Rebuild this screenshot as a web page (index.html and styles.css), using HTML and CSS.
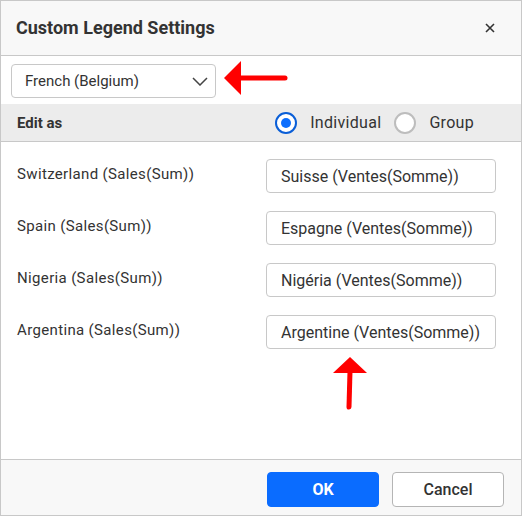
FILE: index.html
```html
<!DOCTYPE html>
<html lang="en">
	<head>
		<meta charset="UTF-8" />
		<title>Custom Legend Settings</title>
		<link rel="stylesheet" href="styles.css">
	</head>
	<body>
		<div class="dialog">
			<div class="dialog-header">
				<h1>Custom Legend Settings</h1>
				<button class="close-btn" aria-label="Close">
					<svg width="10" height="10" viewBox="0 0 10 10">
						<path d="M1 1 L9 9 M9 1 L1 9" stroke="#333" stroke-width="1.6" fill="none" />
					</svg>
				</button>
			</div>

			<div class="lang-row">
				<div class="dropdown">
					<span>French (Belgium)</span>
					<svg width="16" height="9" viewBox="0 0 16 9">
						<path d="M1 1 L8 8 L15 1" stroke="#444" stroke-width="1.5" fill="none" />
					</svg>
				</div>
				<!-- pointer to the language picker -->
				<svg class="arrow arrow-left" width="64" height="36" viewBox="0 0 64 36">
					<polygon points="0,18 17,1 17,35" fill="#f00" />
					<line x1="15" y1="18" x2="61" y2="18" stroke="#f00" stroke-width="5" stroke-linecap="round" />
				</svg>
			</div>

			<div class="edit-bar">
				<span class="edit-label">Edit as</span>
				<div class="radios">
					<label class="radio checked"><span class="dot"></span>Individual</label>
					<label class="radio"><span class="dot"></span>Group</label>
				</div>
			</div>

			<div class="legend-list">
				<div class="legend-row">
					<span class="legend-name">Switzerland (Sales(Sum))</span>
					<div class="legend-input">Suisse (Ventes(Somme))</div>
				</div>
				<div class="legend-row">
					<span class="legend-name">Spain (Sales(Sum))</span>
					<div class="legend-input">Espagne (Ventes(Somme))</div>
				</div>
				<div class="legend-row">
					<span class="legend-name">Nigeria (Sales(Sum))</span>
					<div class="legend-input">Nigéria (Ventes(Somme))</div>
				</div>
				<div class="legend-row">
					<span class="legend-name">Argentina (Sales(Sum))</span>
					<div class="legend-input">Argentine (Ventes(Somme))</div>
				</div>
				<!-- pointer to the translated name -->
				<svg class="arrow arrow-up" width="36" height="54" viewBox="0 0 36 54">
					<polygon points="18,0 1,16 35,16" fill="#f00" />
					<line x1="18" y1="14" x2="17" y2="50" stroke="#f00" stroke-width="5" stroke-linecap="round" />
				</svg>
			</div>

			<div class="dialog-footer">
				<button class="btn btn-primary">OK</button>
				<button class="btn btn-secondary">Cancel</button>
			</div>
		</div>
	</body>
</html>
```

FILE: styles.css
```css
body {
	margin: 0;
	font-family: Roboto, "Liberation Sans", sans-serif;
	color: #333;
	background-color: #fff;
}

.dialog {
	width: 522px;
	height: 516px;
	box-sizing: border-box;
	border: 1px solid #c8c8c8;
	display: flex;
	flex-direction: column;
	background-color: #fff;
}

.dialog-header {
	height: 54px;
	border-bottom: 1px solid #c8c8c8;
	background-color: #f8f8f8;
	display: flex;
	align-items: center;
	justify-content: space-between;
	padding: 0 26px 0 15px;
}

.dialog-header h1 {
	margin: 0;
	font-size: 18px;
	font-weight: 700;
	color: #333;
	padding-bottom: 1px;
}

.close-btn {
	border: none;
	background: none;
	padding: 0;
	display: flex;
	cursor: pointer;
}

.lang-row {
	position: relative;
	padding: 8px 10px 6px;
	display: flex;
}

.dropdown {
	width: 205px;
	height: 34px;
	box-sizing: border-box;
	border: 1px solid #c8c8c8;
	border-radius: 4px;
	display: flex;
	align-items: center;
	justify-content: space-between;
	padding: 0 7px 0 13px;
	font-size: 15px;
	color: #333;
}

.arrow {
	position: absolute;
}

.arrow-left {
	left: 223px;
	top: 4px;
}

.edit-bar {
	height: 37px;
	background-color: #ececec;
	border-bottom: 1px solid #c8c8c8;
	display: flex;
	align-items: center;
	justify-content: space-between;
	padding: 0 47px 0 16px;
}

.edit-label {
	font-size: 15px;
	font-weight: 700;
}

.radios {
	display: flex;
	gap: 13px;
}

.radio {
	display: flex;
	align-items: center;
	gap: 13px;
	font-size: 16px;
	letter-spacing: 0.3px;
	color: #333;
}

.radio .dot {
	width: 22px;
	height: 22px;
	box-sizing: border-box;
	border-radius: 50%;
	border: 2px solid #bdbdbd;
	background-color: #fff;
	display: flex;
	align-items: center;
	justify-content: center;
}

.radio.checked .dot {
	border-color: #0a5ed7;
}

.radio.checked .dot::after {
	content: "";
	width: 10px;
	height: 10px;
	border-radius: 50%;
	background-color: #0d6efd;
}

.legend-list {
	position: relative;
	flex: 1;
	padding: 17px 25px 0 16px;
	display: flex;
	flex-direction: column;
	gap: 18px;
}

.legend-row {
	display: flex;
	align-items: center;
	justify-content: space-between;
}

.legend-name {
	font-size: 15px;
	letter-spacing: 0.35px;
	color: #333;
	padding-bottom: 5px;
}

.legend-input {
	width: 230px;
	height: 34px;
	box-sizing: border-box;
	border: 1px solid #c8c8c8;
	border-radius: 4px;
	padding: 0 14px;
	display: flex;
	align-items: center;
	font-size: 16px;
	color: #333;
	white-space: nowrap;
}

.arrow-up {
	left: 331px;
	top: 215px;
}

.dialog-footer {
	height: 56px;
	box-sizing: border-box;
	border-top: 1px solid #c8c8c8;
	background-color: #f8f8f8;
	display: flex;
	justify-content: flex-end;
	align-items: flex-start;
	gap: 13px;
	padding: 12px 17px 0 0;
}

.btn {
	width: 112px;
	height: 35px;
	border-radius: 4px;
	font-family: Roboto, "Liberation Sans", sans-serif;
	font-size: 16px;
	cursor: pointer;
}

.btn-primary {
	background-color: #0a6cff;
	border: 1px solid #0a6cff;
	color: #fff;
	font-weight: 700;
}

.btn-secondary {
	background-color: #fff;
	border: 1px solid #b5b5b5;
	color: #333;
	font-weight: 500;
}
```
